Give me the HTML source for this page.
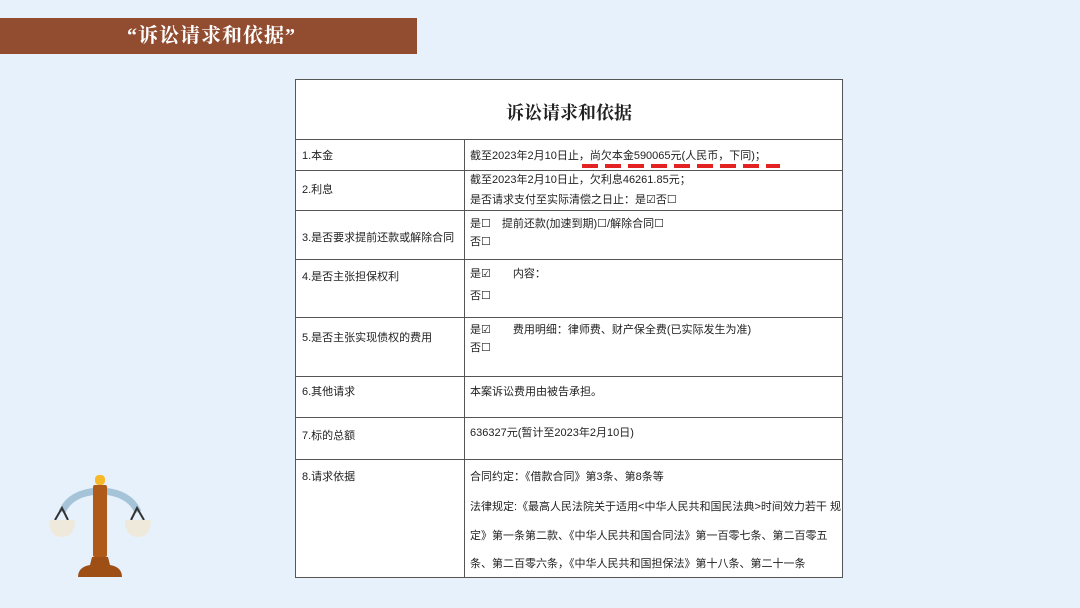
<!DOCTYPE html>
<html><head><meta charset="utf-8"><style>
*{margin:0;padding:0;box-sizing:border-box}
body{width:1080px;height:608px;background:#e7f1fb;position:relative;overflow:hidden;font-family:"Liberation Sans","Noto Sans CJK SC",sans-serif}
.banner{position:absolute;left:0;top:18px;width:417px;height:36px;background:#924d31;color:#fff;font-family:"Liberation Serif","Noto Serif CJK SC",serif;font-size:20px;font-weight:bold;line-height:36px;padding-left:127px;letter-spacing:1px}
.tbl{position:absolute;left:295px;top:79px;width:548px;height:499px;background:#fff;border:1.5px solid #555}
.h{position:absolute;left:0;right:0;border-top:1.5px solid #555}
.v{position:absolute;left:168px;top:59px;bottom:0;border-left:1.5px solid #555}
.t{position:absolute;font-size:11px;color:#222;white-space:nowrap;line-height:14px}
.title{position:absolute;left:0;right:0;top:19px;text-align:center;font-family:"Liberation Serif","Noto Serif CJK SC",serif;font-weight:bold;font-size:18px;color:#222}
.dash{position:absolute;left:286px;top:84px;width:198px;height:4px;background:repeating-linear-gradient(90deg,#e32222 0 16px,transparent 16px 23px)}
</style></head><body>
<div class="banner">“诉讼请求和依据”</div>
<div class="tbl">
<div class="title">诉讼请求和依据</div>
<div class="h" style="top:59px"></div>
<div class="h" style="top:90px"></div>
<div class="h" style="top:130px"></div>
<div class="h" style="top:179px"></div>
<div class="h" style="top:237px"></div>
<div class="h" style="top:296px"></div>
<div class="h" style="top:337px"></div>
<div class="h" style="top:379px"></div>
<div class="v"></div>
<div class="t" style="left:6px;top:69px">1.本金</div>
<div class="t" style="left:174px;top:69px">截至2023年2月10日止，尚欠本金590065元(人民币，下同)；</div>
<div class="dash"></div>
<div class="t" style="left:6px;top:103px">2.利息</div>
<div class="t" style="left:174px;top:93px">截至2023年2月10日止，欠利息46261.85元；</div>
<div class="t" style="left:174px;top:113px">是否请求支付至实际清偿之日止：是☑否☐</div>
<div class="t" style="left:6px;top:151px">3.是否要求提前还款或解除合同</div>
<div class="t" style="left:174px;top:137px">是☐　提前还款(加速到期)☐/解除合同☐</div>
<div class="t" style="left:174px;top:155px">否☐</div>
<div class="t" style="left:6px;top:190px">4.是否主张担保权利</div>
<div class="t" style="left:174px;top:187px">是☑　　内容：</div>
<div class="t" style="left:174px;top:209px">否☐</div>
<div class="t" style="left:6px;top:251px">5.是否主张实现债权的费用</div>
<div class="t" style="left:174px;top:243px">是☑　　费用明细：律师费、财产保全费(已实际发生为准)</div>
<div class="t" style="left:174px;top:261px">否☐</div>
<div class="t" style="left:6px;top:305px">6.其他请求</div>
<div class="t" style="left:174px;top:305px">本案诉讼费用由被告承担。</div>
<div class="t" style="left:6px;top:349px">7.标的总额</div>
<div class="t" style="left:174px;top:346px">636327元(暂计至2023年2月10日)</div>
<div class="t" style="left:6px;top:390px">8.请求依据</div>
<div class="t" style="left:174px;top:390px">合同约定：《借款合同》第3条、第8条等</div>
<div class="t" style="left:174px;top:420px">法律规定:《最高人民法院关于适用&lt;中华人民共和国民法典&gt;时间效力若干 规</div>
<div class="t" style="left:174px;top:449px">定》第一条第二款、《中华人民共和国合同法》第一百零七条、第二百零五</div>
<div class="t" style="left:174px;top:477px">条、第二百零六条，《中华人民共和国担保法》第十八条、第二十一条</div>
</div>
<svg style="position:absolute;left:40px;top:465px" width="120" height="120" viewBox="0 0 120 120">
<path d="M22 47 Q30 28 58 26 M62 26 Q90 28 98 47" stroke="#a6c4d8" stroke-width="7" fill="none"/>
<path d="M15 55 L22 43 L28 55 M91 55 L97 43 L104 55" stroke="#333" stroke-width="2" fill="none"/>
<path d="M9 55 L35 55 Q35 72 22 72 Q9 72 9 55Z M85 55 L111 55 Q111 72 98 72 Q85 72 85 55Z" fill="#efe9dc"/>
<rect x="55" y="10" width="10" height="10" rx="4" fill="#f7b928"/>
<rect x="53" y="20" width="14" height="72" rx="2" fill="#b05a1a"/>
<path d="M52 92 L68 92 L70 100 Q82 102 82 112 L38 112 Q38 102 50 100Z" fill="#9e4f16"/>
</svg>
</body></html>
